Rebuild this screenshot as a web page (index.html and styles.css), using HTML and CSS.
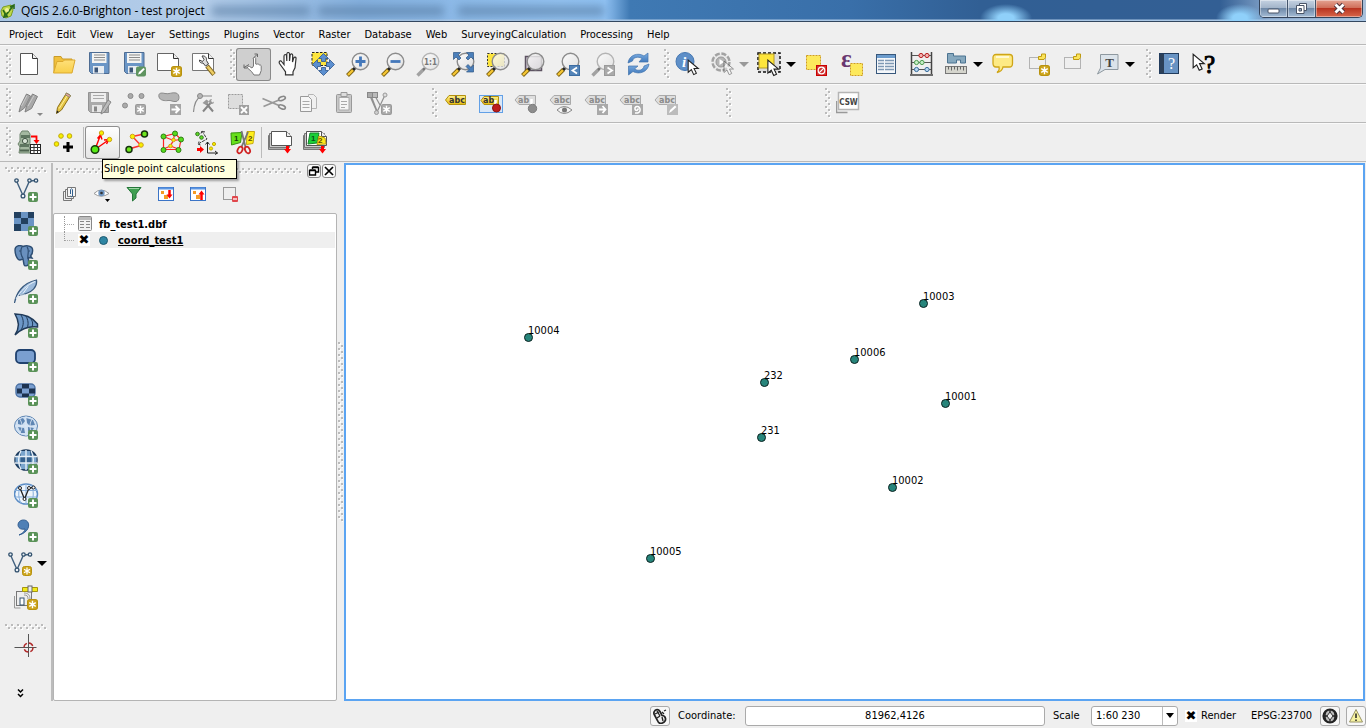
FILE: index.html
```html
<!DOCTYPE html>
<html lang="en">
<head>
<meta charset="utf-8">
<title>QGIS 2.6.0-Brighton - test project</title>
<link rel="stylesheet" href="styles.css">
</head>
<body>
<svg class="gradients" aria-hidden="true">
  <defs>
    <linearGradient id="g-glass" x1="0" y1="0" x2="1" y2="1"><stop offset="0" stop-color="#fff"/><stop offset="1" stop-color="#dcdcdc"/></linearGradient>
    <linearGradient id="g-folder" x1="0" y1="0" x2="0" y2="1"><stop offset="0" stop-color="#ffe07a"/><stop offset="1" stop-color="#f8cf4a"/></linearGradient>
    <linearGradient id="g-tag" x1="0" y1="0" x2="0" y2="1"><stop offset="0" stop-color="#fdf08a"/><stop offset="1" stop-color="#e6bd10"/></linearGradient>
    <linearGradient id="g-blue" x1="0" y1="0" x2="0" y2="1"><stop offset="0" stop-color="#7fb0e4"/><stop offset="1" stop-color="#3a74b8"/></linearGradient>
  </defs>
</svg>
<svg class="sprites" aria-hidden="true">
  <symbol id="plus" viewBox="0 0 10 10"><rect width="10" height="10" rx="2" fill="#5a9258"/><path d="M5 1.500v7M1.500 5h7" stroke="#fff" stroke-width="2"/></symbol>
  <symbol id="star" viewBox="0 0 10 10"><rect x=".5" y=".5" width="9" height="9" rx="2" fill="#cda51c" stroke="#b8920e"/><path d="M5 1.500v7M2 3.200l6 3.600M8 3.200l-6 3.600" stroke="#fff" stroke-width="1.300"/></symbol>
  <symbol id="star-grey" viewBox="0 0 10 10"><rect x=".5" y=".5" width="9" height="9" rx="1.500" fill="#aaa" stroke="#999"/><path d="M5 1.500v7M2 3.200l6 3.600M8 3.200l-6 3.600" stroke="#fff" stroke-width="1.300"/></symbol>
  <symbol id="cursor" viewBox="0 0 12 16"><path d="M1 1v11.500l3-2.500 2.200 4.700 2.500-1.200-2.200-4.500h4z" fill="#fff" stroke="#222" stroke-width="1"/></symbol>
  <symbol id="lens" viewBox="0 0 25 25"><path d="M1.500 23.500l6-6" stroke="#7a6012" stroke-width="4"/><path d="M2 23l5.500-5.500" stroke="#f5c634" stroke-width="2.400"/><path d="M7 18l2.500-2.500" stroke="#222" stroke-width="3"/><circle cx="14.500" cy="9.500" r="8.300" fill="url(#g-glass)" fill-opacity=".8" stroke="#8c8c8c" stroke-width="1.400"/></symbol>
  <symbol id="lens-grey" viewBox="0 0 25 25"><path d="M1.500 23.500l6-6" stroke="#a2a2a2" stroke-width="3.400"/><path d="M7 18l2.500-2.500" stroke="#777" stroke-width="2.500"/><circle cx="14.500" cy="9.500" r="8.300" fill="url(#g-glass)" fill-opacity=".7" stroke="#b4b4b4" stroke-width="1.400"/></symbol>
  <symbol id="tag-grey" viewBox="0 0 25 25"><path d="M6 4.500h16.500v9H6L2 9z" fill="#dedede" stroke="#aaa"/></symbol>

  <symbol id="i-new" viewBox="0 0 25 25"><path d="M3.500 1.500h12l5 5v16h-17z" fill="#fff" stroke="#555"/><path d="M15.500 1.500v5h5" fill="#eee" stroke="#333"/></symbol>
  <symbol id="i-open" viewBox="0 0 25 25"><path d="M2 20V4.500h7l1.500 2.500h9.500v4" fill="#f0c03c" stroke="#c99b28"/><path d="M1.500 21L5 9.500h6L12.500 8h10.500l-3 13z" fill="url(#g-folder)" stroke="#dca92e"/></symbol>
  <symbol id="i-save" viewBox="0 0 25 25"><path d="M2.500.500h19.500v21H4.500l-2-2z" fill="#6b96c6" stroke="#4e6c92"/><rect x="5" y="1" width="14.500" height="10" fill="#f4f4f2"/><path d="M7 3h11M7 5.500h11M7 8h11" stroke="#8b8b8b"/><rect x="6" y="14" width="11" height="7.500" fill="#e8edf2"/><rect x="7.500" y="15.500" width="3.500" height="5" fill="#3b5577"/></symbol>
  <symbol id="i-saveas" viewBox="0 0 25 25"><use href="#i-save"/><rect x="14" y="14.500" width="10" height="10" rx="2" fill="#5f9460"/><path d="M16 22.500l1-2.500 4.500-4 1.300 1.300-4.300 4.400z" fill="#fff"/></symbol>
  <symbol id="i-composer" viewBox="0 0 25 25"><path d="M.5 1.500h16l5 5v12H.5z" fill="#fff" stroke="#666"/><path d="M16.500 1.500v5h5" fill="#eee" stroke="#333"/><use href="#star" x="14" y="14" width="11" height="11"/></symbol>
  <symbol id="i-manager" viewBox="0 0 25 25"><path d="M.5 1.500h16l5 5v12H.5z" fill="#fff" stroke="#777"/><path d="M16.500 1.500v5h5" fill="#eee" stroke="#333"/><path d="M15 14l7 8.500" stroke="#7d6420" stroke-width="4.400"/><path d="M15.500 14.500l6.200 7.600" stroke="#eccb62" stroke-width="2.600"/><path d="M10 4c2.500-.5 5 1 4.500 4.500l2 3.500-3 2-2.500-3c-2 .5-4-1-3.500-3l3 1.500 1.500-2z" fill="#ddd" stroke="#444"/></symbol>
  <symbol id="i-touch" viewBox="0 0 25 25"><path d="M12 6.500l4-4M13.500 2h3v3M8 12.500l-5 3M3 12.500v3.500h3.500" stroke="#666" fill="none"/><path d="M12.500 14V6.500c.4-1.500 1.800-1.500 2.200 0V12l1.300.3c1-.8 1.800-.3 2.200.8 1-.5 1.800 0 2 1v4.500l-1.700 4.400h-5.500l-2.500-3.500-4-3.500c-.5-1.500 1-2 2-1.500l2.500 1.500z" fill="#fff" stroke="#777"/></symbol>
  <symbol id="i-pan" viewBox="0 0 25 25"><path d="M7.500 17l-4-5.500c-1-2.500 1-3.500 2.500-1.500l2 2.500V4c.3-2 2.300-2 2.500 0l.3 5V2c.4-2 2.500-2 2.700 0v7l.7-6c.5-1.800 2.500-1.500 2.500.3L16.500 10l1.200-4c.8-1.500 2.600-1 2.300.8l-1 9-2 4v3H9.500v-3z" fill="#fff" stroke="#333" stroke-width="1.200"/></symbol>
  <symbol id="i-pansel" viewBox="0 0 25 25"><rect x="1" y=".500" width="15" height="13" fill="#fde53c" stroke="#222" stroke-dasharray="2.500 1.500"/><path d="M12.500 1.500l5 5h-3v3h-4v-3h-3zM12.500 23.500l-5-5h3v-3h4v3h3zM1.500 12.500l5-5v3h3v4h-3v3zM23.500 12.500l-5-5v3h-3v4h3v3z" fill="#5b8fd0" stroke="#2f568a" stroke-width=".8"/></symbol>
  <symbol id="i-zin" viewBox="0 0 25 25"><use href="#lens"/><path d="M14.500 4.500v10M9.500 9.500h10" stroke="#4478ba" stroke-width="2.800"/></symbol>
  <symbol id="i-zout" viewBox="0 0 25 25"><use href="#lens"/><path d="M9.500 9.500h10" stroke="#4478ba" stroke-width="2.800"/></symbol>
  <symbol id="i-z11" viewBox="0 0 25 25"><use href="#lens-grey"/><text x="14.500" y="13" text-anchor="middle" class="t9" fill="#777">1:1</text></symbol>
  <symbol id="i-zfull" viewBox="0 0 25 25"><use href="#lens"/><path d="M2.500.500h7l-2.500 2.500 3 3-2 2-3-3-2.500 2.500zM22.500.500v7L20 5l-3 3-2-2 3-3-2.500-2.500zM22.500 20v-7L20 15.500l-3-3-2 2 3 3-2.500 2.500z" fill="#4b7fba" stroke="#2e5684" stroke-width=".7"/></symbol>
  <symbol id="i-zsel" viewBox="0 0 25 25"><rect x="1.500" y="1.500" width="17" height="13" fill="#fde53c" stroke="#333" stroke-dasharray="2 1.500"/><use href="#lens"/></symbol>
  <symbol id="i-zlay" viewBox="0 0 25 25"><path d="M4.500 4.500h16v14h-16z" fill="#c9bfcd" stroke="#5d5362" stroke-width="1.500"/><use href="#lens"/></symbol>
  <symbol id="i-zlast" viewBox="0 0 25 25"><use href="#lens"/><rect x="13.500" y="13.500" width="10" height="10" fill="#5484b8" stroke="#3b6ca2"/><path d="M21 15.500l-4.500 3 4.500 3" fill="none" stroke="#fff" stroke-width="1.800"/></symbol>
  <symbol id="i-znext" viewBox="0 0 25 25"><use href="#lens-grey"/><rect x="13.500" y="13.500" width="10" height="10" fill="#aaa" stroke="#9a9a9a"/><path d="M16.500 15.500l4.500 3-4.500 3" fill="none" stroke="#fff" stroke-width="1.800"/></symbol>
  <symbol id="i-refresh" viewBox="0 0 25 25"><path d="M2 11C3 3 12 0 18 4l4-3v9h-9l3-3.500C12 4 7 5.500 6.500 9z" fill="url(#g-blue)" stroke="#4274ad" stroke-width=".7"/><path d="M23 12c-1 8-10 11-16 7.500L2.500 23v-9h9.500l-3.500 3C12.500 19.500 17.500 18 18 14z" fill="url(#g-blue)" stroke="#4274ad" stroke-width=".7"/></symbol>
  <symbol id="i-info" viewBox="0 0 25 25"><circle cx="10" cy="9.500" r="9" fill="#5e8fc8" stroke="#4477b2"/><text x="9" y="15" text-anchor="middle" class="serif-i" fill="#fff">i</text><use href="#cursor" x="12" y="7" width="13" height="17"/></symbol>
  <symbol id="i-action" viewBox="0 0 25 25"><circle cx="11" cy="10" r="8.500" fill="#e8e8e8" stroke="#a2a2a2" stroke-width="2.400" stroke-dasharray="5 1.700"/><circle cx="11" cy="10" r="5" fill="#b5b5b5" stroke="#999"/><path d="M9.500 7l4.500 3-4.500 3z" fill="#fff"/><use href="#cursor" x="13" y="8" width="12" height="16" opacity=".45"/></symbol>
  <symbol id="i-select" viewBox="0 0 25 25"><rect x="1" y="1" width="22" height="19" fill="#ddd" stroke="#111" stroke-width="1.500" stroke-dasharray="3 2"/><rect x="2" y="2" width="15" height="14" fill="#fde53c" stroke="#b59c24"/><use href="#cursor" x="9" y="7" width="15" height="18"/></symbol>
  <symbol id="i-desel" viewBox="0 0 25 25"><rect x="2.500" y="3.500" width="14" height="14" fill="#fde95c" stroke="#cf9d20" stroke-dasharray="2 1"/><rect x="12.500" y="13.500" width="10" height="10" fill="#cf3434" stroke="#c00"/><circle cx="17.500" cy="18.500" r="3.300" fill="none" stroke="#fff" stroke-width="1.200"/><path d="M15.300 20.700l4.500-4.500" stroke="#fff" stroke-width="1.200"/></symbol>
  <symbol id="i-expr" viewBox="0 0 25 25"><text x="2" y="15" class="eps" fill="#69376f">ε</text><rect x="11.500" y="11.500" width="12" height="12" fill="#fde95c" stroke="#cf9d20" stroke-dasharray="2 1"/></symbol>
  <symbol id="i-table" viewBox="0 0 25 25"><rect x="2.500" y="2.500" width="19" height="19" fill="#f4f7fa" stroke="#38587c"/><path d="M3 4.500h18" stroke="#6c9ccd" stroke-width="3"/><path d="M4 8.500h6M11 8.500h9M4 11.500h6M11 11.500h9M4 14.500h6M11 14.500h9M4 17.500h6M11 17.500h9" stroke="#7f99b4" stroke-width="1.400"/></symbol>
  <symbol id="i-abacus" viewBox="0 0 25 25"><path d="M2.500 0v22M22.500 0v22M1 23h23" stroke="#444" stroke-width="1.500"/><path d="M3 3.500h19M3 10.500h19M3 17.500h19" stroke="#555"/><g fill="#f6b3b3" stroke="#b81d1d"><circle cx="12" cy="3.500" r="2.100"/><circle cx="18" cy="3.500" r="2.100"/></g><g fill="#c6efc6" stroke="#4d9a50"><circle cx="7.500" cy="10.500" r="2.100"/><circle cx="13" cy="10.500" r="2.100"/></g><g fill="#b9d6ee" stroke="#376d9e"><circle cx="7.500" cy="17.500" r="2.100"/><circle cx="18" cy="17.500" r="2.100"/></g></symbol>
  <symbol id="i-measure" viewBox="0 0 25 25"><path d="M3.500 1.500h6v2.500h12v7h-5V8h-4v3h-9z" fill="#86a8be" stroke="#4b7390"/><rect x="1.500" y="14.500" width="21" height="7" fill="#d5d5cd" stroke="#777"/><path d="M4.500 14.500v3M7.500 14.500v4M10.500 14.500v3M13.500 14.500v4M16.500 14.500v3M19.500 14.500v4" stroke="#666"/></symbol>
  <symbol id="i-tips" viewBox="0 0 25 25"><path d="M5 2.500h13.500c2 0 3 1.500 3 3v6c0 2-1 3.500-3 3.500H12c-.5 3-3 5-6 5.500C8 19 8.500 17 8 15H5c-2 0-3-1.500-3-3.500v-6c0-1.500 1-3 3-3z" fill="#fdea85" stroke="#cfa517" stroke-width="1.300"/><path d="M5 5h13" stroke="#fff8cf" stroke-width="2"/></symbol>
  <symbol id="i-bmark" viewBox="0 0 25 25"><rect x="3.500" y="5.500" width="16" height="11" fill="none" stroke="#777" stroke-dasharray="1 1"/><path d="M12.500 7.500v-3h3v-2.500h4v3.500l-1.500 2z" fill="#fbe45a" stroke="#bf9b10"/></symbol>
  <symbol id="i-bmnew" viewBox="0 0 25 25"><use href="#i-bmark"/><use href="#star" x="13" y="13" width="11" height="11"/></symbol>
  <symbol id="i-textann" viewBox="0 0 25 25"><path d="M4.500 2.500H22v15H9L1.500 22l3-6z" fill="#dbe3ea" stroke="#8e989f"/><text x="13.500" y="14.500" text-anchor="middle" class="serif12" fill="#444">T</text></symbol>
  <symbol id="i-help" viewBox="0 0 25 25"><rect x="2.500" y="1.500" width="19" height="20" fill="#6893c3" stroke="#223c5d"/><path d="M3 2h4v19H3z" fill="#2c4058"/><text x="14.500" y="17" text-anchor="middle" class="serif15" fill="#fff">?</text></symbol>
  <symbol id="i-what" viewBox="0 0 25 25"><use href="#cursor" x="0" y="1" width="14" height="19"/><text x="12" y="21" class="qmark" fill="#000">?</text></symbol>

  <symbol id="i-edits" viewBox="0 0 25 25"><g fill="#a8a8a8" stroke="#808080"><path d="M2 21l1.500-6 6-12 4 2-6 12z"/><path d="M8 21l1.500-6 6-12 5 2.500-6 12z"/></g><path d="M4.500 15l5.500-10.500M11 15l6-10.500" stroke="#ccc"/></symbol>
  <symbol id="i-pencil" viewBox="0 0 25 25"><path d="M4.500 22.500l1-6L14.500 2l4 2.500-9 14.500z" fill="#e5c545" stroke="#8d7018"/><path d="M14.500 2l4 2.500-1 2-4.200-2.700z" fill="#e8a0a0" stroke="#886"/><path d="M7.200 17.500L15 5" stroke="#fff2a0"/><path d="M4.500 22.500l.5-3 2 1.500z" fill="#222"/></symbol>
  <symbol id="i-saveed" viewBox="0 0 25 25"><path d="M1.500 1.500h20v20h-18l-2-2z" fill="#aaa" stroke="#929292"/><path d="M4 2h15v9H4z" fill="#eee"/><path d="M6 4.500h11M6 7.500h11" stroke="#aaa"/><path d="M5 14h10v7H5z" fill="#e6e6e6"/><path d="M7 15.500h3v5H7z" fill="#888"/><path d="M14 23l1-4 6-10 3 2-6.500 10z" fill="#bbb" stroke="#888"/></symbol>
  <symbol id="i-addf" viewBox="0 0 25 25"><g fill="#aaa" stroke="#8d8d8d"><circle cx="8.500" cy="5" r="2.500"/><circle cx="19.500" cy="5" r="2.500"/><circle cx="3" cy="14.500" r="2.500"/></g><use href="#star-grey" x="13" y="13" width="11" height="11"/></symbol>
  <symbol id="i-movef" viewBox="0 0 25 25"><path d="M2 6c-1-4 2-4.500 6-3.500s7-1.500 11-.5c4 1 4 8 0 8.500-3 .5-5-1.500-8-1s-8 0-9-3.500z" fill="#b5b5b5" stroke="#8b8b8b"/><rect x="13" y="13" width="11" height="11" fill="#a5a5a5"/><path d="M14.500 18.500h7M18.500 15l3.500 3.500-3.500 3.500" fill="none" stroke="#fff" stroke-width="2"/></symbol>
  <symbol id="i-node" viewBox="0 0 25 25"><path d="M1.500 21C2 14 4 8 8.500 5.500M8 5h12" fill="none" stroke="#8a8a8a" stroke-width="1.200"/><circle cx="8" cy="5" r="2.500" fill="#b5b5b5" stroke="#888"/><path d="M11 20.500l7.500-8.500M14 12l7 8.500" stroke="#858585" stroke-width="2"/><path d="M10.500 12l4-3.500 2.500 2-3 3.500zM17 11q0-3 3-3l-1 2 1.500 1.500 1.500-1q0 3-3 2.500z" fill="#999"/></symbol>
  <symbol id="i-delsel" viewBox="0 0 25 25"><rect x="1.500" y="3.500" width="14" height="14" fill="#ddd" stroke="#9b9b9b" stroke-dasharray="2 1"/><rect x="12" y="14" width="10" height="10" fill="#a0a0a0"/><path d="M14 16l6 6M20 16l-6 6" stroke="#fff" stroke-width="1.800"/></symbol>
  <symbol id="i-cut" viewBox="0 0 25 25"><path d="M.5 7.500L17 14.500M1.500 15.500L17 9" stroke="#999" stroke-width="1.800"/><g fill="none" stroke="#888" stroke-width="1.600"><ellipse cx="20" cy="7.500" rx="3.500" ry="1.800" transform="rotate(-20 20 7.500)"/><ellipse cx="20" cy="16" rx="3.500" ry="1.800" transform="rotate(20 20 16)"/></g></symbol>
  <symbol id="i-copy" viewBox="0 0 25 25"><path d="M11.500 3.500h5l3 3v11h-8z" fill="#f0f0f0" stroke="#b5b5b5"/><path d="M3.500 5.500h8l3 3v12h-11z" fill="#f6f6f6" stroke="#999"/><path d="M5.500 10.500h7M5.500 13.500h7M5.500 16.500h7" stroke="#aaa"/></symbol>
  <symbol id="i-paste" viewBox="0 0 25 25"><rect x="4.500" y="3.500" width="15" height="18" rx="1" fill="#c8c8c8" stroke="#999"/><path d="M7 6.500h10v12.500H7z" fill="#f6f6f6" stroke="#aaa"/><path d="M9 1.500h6v4H9z" fill="#ddd" stroke="#999"/><path d="M9 10.500h6M9 13.500h6M9 16.500h4" stroke="#aaa"/></symbol>
  <symbol id="i-topo" viewBox="0 0 25 25"><path d="M3 5l7 16L18 4M8 5l5 9M10 20l-5-13" fill="none" stroke="#8f8f8f" stroke-width="1.200"/><rect x=".5" y="1.500" width="5" height="5" fill="#aaa" stroke="#888"/><rect x="5.500" y="1.500" width="5" height="5" fill="#bbb" stroke="#888"/><circle cx="18" cy="4" r="2" fill="#ddd" stroke="#999"/><circle cx="9.500" cy="21.500" r="2" fill="#ccc" stroke="#999"/><use href="#star-grey" x="14" y="13" width="11" height="11"/></symbol>
  <symbol id="i-abc" viewBox="0 0 25 25"><path d="M6 4.500h16.500v9H6L2.500 9z" fill="url(#g-tag)" stroke="#b2900f"/><text x="14" y="12" text-anchor="middle" class="abc" fill="#333">abc</text></symbol>
  <symbol id="i-abcpin" viewBox="0 0 25 25"><rect x="1.500" y="4.500" width="23" height="17" fill="#d9e7f8" stroke="#62a0e6"/><path d="M6 5.500h14.500v8H6L3 9.500z" fill="url(#g-tag)" stroke="#b2900f"/><text x="5" y="12" class="abc" fill="#333">ab</text><path d="M17.500 9v7" stroke="#fff" stroke-width="2.500"/><circle cx="18.500" cy="17" r="4" fill="#bd1d1d" stroke="#8c1212"/></symbol>
  <symbol id="i-abcpin2" viewBox="0 0 25 25"><use href="#tag-grey"/><text x="5" y="12" class="abc" fill="#8a8a8a">ab</text><path d="M18.500 8v8" stroke="#fff" stroke-width="2.500"/><circle cx="19.500" cy="17.500" r="4.200" fill="#8d8d8d" stroke="#7d7d7d"/></symbol>
  <symbol id="i-abceye" viewBox="0 0 25 25"><use href="#tag-grey"/><text x="14" y="12" text-anchor="middle" class="abc" fill="#8a8a8a">abc</text><path d="M9 19q7-7 15 0q-8 7-15 0z" fill="#f4f4f4" stroke="#888"/><circle cx="16.500" cy="19" r="2.500" fill="#777"/></symbol>
  <symbol id="i-abcmove" viewBox="0 0 25 25"><use href="#tag-grey"/><text x="14" y="12" text-anchor="middle" class="abc" fill="#8a8a8a">abc</text><rect x="14" y="13" width="11" height="11" fill="#a9a9a9"/><path d="M16 18.500h6M19.500 15l3 3.500-3 3.500" fill="none" stroke="#fff" stroke-width="1.800"/></symbol>
  <symbol id="i-abcrot" viewBox="0 0 25 25"><use href="#tag-grey"/><text x="14" y="12" text-anchor="middle" class="abc" fill="#8a8a8a">abc</text><rect x="14" y="13" width="11" height="11" fill="#a9a9a9"/><path d="M17 22c7 1 6-7 2-6.500-3 .5-2.500 4 0 4l1.500-2" fill="none" stroke="#fff" stroke-width="1.500"/></symbol>
  <symbol id="i-abcedit" viewBox="0 0 25 25"><use href="#tag-grey"/><text x="14" y="12" text-anchor="middle" class="abc" fill="#8a8a8a">abc</text><rect x="14" y="13" width="11" height="11" fill="#bcbcbc"/><path d="M16 22l1-3 5-4.500 1.500 1.500-5 4.500z" fill="#fff"/></symbol>
  <symbol id="i-csw" viewBox="0 0 25 25"><path d="M.5 10v11.500h11" fill="none" stroke="#999" stroke-width="1.500"/><rect x="2.500" y="1.500" width="20" height="17" fill="#fff" stroke="#b5b5b5" stroke-width="1.500"/><text x="12.500" y="13.500" text-anchor="middle" class="csw" fill="#444">CSW</text></symbol>

  <symbol id="i-station" viewBox="0 0 25 25"><path d="M3 4l2-3h6l2 3v9l-1 3 2 7H2l1-6-2-3 2-3z" fill="#a3b8a0" stroke="#6f846e"/><path d="M4 5h9v3H4zM3 14h9v3H3z" fill="#5e7660"/><circle cx="8" cy="11" r="2.600" fill="#d9e4d6" stroke="#435646"/><path d="M3 20.500h9" stroke="#4e6450" stroke-width="2"/><path d="M14 6.500h5.500v5" fill="none" stroke="#f00" stroke-width="1.800"/><path d="M16.500 10h6l-3 4z" fill="#f00"/><rect x="13.500" y="14.500" width="10" height="9" fill="#fff" stroke="#222"/><path d="M17 14.500v9M20.500 14.500v9M13.500 17.500h10M13.500 20.500h10" stroke="#333"/></symbol>
  <symbol id="i-addpt" viewBox="0 0 25 25"><g fill="#f7ef00" stroke="#c1a90a"><circle cx="9" cy="6" r="2.300"/><circle cx="17.500" cy="6" r="2.300"/><circle cx="4.500" cy="14" r="2.300"/></g><path d="M16 12v10M11 17h10" stroke="#000" stroke-width="3"/></symbol>
  <symbol id="i-single" viewBox="0 0 25 25"><path d="M5 19.500L10.500 5M5 19.500L18.500 10M7.500 8.500l3-3.500 1.500 4.500M14 10l5-.5-2.500 4.500" fill="none" stroke="#f00" stroke-width="1.400"/><circle cx="5" cy="19.500" r="3.800" fill="#56ea14" stroke="#163c0d" stroke-width="1.500"/><g fill="#f7ef00" stroke="#c9a21b"><circle cx="11.500" cy="3" r="2.200"/><circle cx="19.500" cy="9.500" r="2.200"/></g></symbol>
  <symbol id="i-trav" viewBox="0 0 25 25"><path d="M19 4L7.500 6.500l8.500 9L3.500 19" fill="none" stroke="#f33" stroke-width="1.500"/><g fill="#6ee61e" stroke="#16330e" stroke-width="1.500"><circle cx="19.500" cy="4" r="3"/><circle cx="4" cy="19.500" r="3"/></g><g fill="#f7ef00" stroke="#d0a01d"><circle cx="7.500" cy="6.500" r="2.300"/><circle cx="16" cy="15" r="2.300"/></g></symbol>
  <symbol id="i-net" viewBox="0 0 25 25"><path d="M3.500 6.500L15 3.500l6 6-2 10H3.500zM3.500 6.500l10 4 7-1M13.500 10l-3 6 9 3.500M10.500 16l-7 3M13.500 10l1-6.500" fill="none" stroke="#f22" stroke-width="1.200"/><g fill="#57da1c" stroke="#2f7e16"><circle cx="3.500" cy="6.500" r="2.500"/><circle cx="15" cy="3.500" r="2.500"/><circle cx="21" cy="9.500" r="2.500"/><circle cx="18.500" cy="20" r="2.500"/><circle cx="3.500" cy="20" r="2.500"/></g><g fill="#f7ef00" stroke="#d0a01d"><circle cx="13.500" cy="10" r="1.800"/><circle cx="10.500" cy="16" r="1.800"/></g></symbol>
  <symbol id="i-transf" viewBox="0 0 25 25"><g fill="#5cdb22" stroke="#34761f"><circle cx="2.500" cy="4" r="1.800"/><circle cx="6.500" cy="7.500" r="1.800"/></g><path d="M7 1l5 8-9 5M6 3.500L7 1l3 1M5.500 15l-2.500-1 1-2.500" fill="none" stroke="#333" stroke-dasharray="3 1"/><path d="M12.500 12v11h10M10.500 14.500l2-2.500 2 2.500M20 21l2.500 2-2.500 1.500" fill="none" stroke="#222"/><path d="M2 19.500h4" stroke="#f00" stroke-width="3"/><path d="M5 16l4 3.500L5 23z" fill="#f00"/><g fill="#f7ef00" stroke="#c1a90a"><circle cx="19" cy="14" r="1.600"/><circle cx="16" cy="18.500" r="1.600"/></g></symbol>
  <symbol id="i-divide" viewBox="0 0 25 25"><path d="M1 3l11-.5-1.500 10L1.500 15z" fill="#66e01b" stroke="#38930f"/><path d="M17 1.500h7.500l-1.500 12-6.500 1z" fill="#ffef1a" stroke="#c7a912"/><path d="M11.500 1l4 16M18 2l-6.500 15" stroke="#777" stroke-width="1.800"/><g fill="none" stroke="#cf2222" stroke-width="1.800"><ellipse cx="10" cy="20" rx="2.300" ry="3.500" transform="rotate(25 10 20)"/><ellipse cx="17.500" cy="20" rx="2.300" ry="3.500" transform="rotate(-25 17.500 20)"/></g><text x="4" y="11" class="num" fill="#143f08">1</text><text x="18" y="11" class="num" fill="#5b4a05">2</text></symbol>
  <symbol id="i-sheets" viewBox="0 0 25 25"><path d="M.5 5.500h20v14H.500z" fill="#aaa" stroke="#777"/><path d="M1.500 3.500h20v14h-20z" fill="#ccc" stroke="#777"/><path d="M3.500 1.500h15l5 5v9h-20z" fill="#fff" stroke="#555"/><path d="M18.500 1.500v5h5" fill="#eee" stroke="#555"/></symbol>
  <symbol id="i-sheet1" viewBox="0 0 25 25"><use href="#i-sheets"/><path d="M19.500 16v4" stroke="#f00" stroke-width="3"/><path d="M16 19h7l-3.500 4.500z" fill="#f00"/></symbol>
  <symbol id="i-sheet2" viewBox="0 0 25 25"><use href="#i-sheets"/><path d="M7 3h9l-2 10-9 1z" fill="#1bcf37" stroke="#15862b"/><path d="M16 6l6 2 1 6-9 .5z" fill="#ffe81a" stroke="#bba013"/><text x="8" y="11" class="num" fill="#0b4e1b">1</text><text x="15" y="13" class="num" fill="#5b4a05">2</text><path d="M19.500 16v4" stroke="#f00" stroke-width="3"/><path d="M16 19h7l-3.500 4.500z" fill="#f00"/></symbol>

  <symbol id="vee" viewBox="0 0 25 25"><path d="M2.500 4L9 18.500 15.500 4l6.500-.5" fill="none" stroke="#42617f" stroke-width="1.400"/><g fill="#eef3f8" stroke="#34536f" stroke-width="1.300"><circle cx="2.500" cy="3.500" r="1.700"/><circle cx="9" cy="19" r="1.900"/><circle cx="15.500" cy="3.500" r="1.700"/><circle cx="22" cy="3.500" r="1.700"/></g></symbol>
  <symbol id="l-vec" viewBox="0 0 25 25"><use href="#vee"/><use href="#plus" x="14" y="15" width="10" height="10"/></symbol>
  <symbol id="l-ras" viewBox="0 0 25 25"><path d="M0 1h20v19H0z" fill="#6a94c4"/><path d="M0 1h7v6H0zM14 1h6v6h-6zM7 7h7v6H7zM0 13h7v7H0z" fill="#22405f"/><use href="#plus" x="14" y="15" width="10" height="10"/></symbol>
  <symbol id="l-pg" viewBox="0 0 25 25"><path d="M1 5c0-5 5-5 8-3.500C13 0 18 1 18.500 4c.5 3-1 6-2 7l1.500 2-3.500-.5v6c-.5 3-4 3-4.500 1L9 14l-3 1C3 15 1 9 1 5z" fill="#6990be" stroke="#2d4d72" stroke-width="1.400"/><path d="M8 2c-2 3-1 9 1 11M13 2c3 3 0 8 1 12M5 6h1.500M15 6h1" fill="none" stroke="#2d4d72" stroke-width="1.200"/><use href="#plus" x="14" y="15" width="10" height="10"/></symbol>
  <symbol id="l-feather" viewBox="0 0 25 25"><path d="M.5 24C2 15 8 4 22.500 1c1 6-3 13-18 15.500" fill="#9dbbdc" stroke="#37577c" stroke-width="1.200"/><path d="M2 20C6 12 13 6 21 2.500M9 14.500l5-7M6 16h5" fill="none" stroke="#e9f2fa"/><use href="#plus" x="14" y="15" width="10" height="10"/></symbol>
  <symbol id="l-mssql" viewBox="0 0 25 25"><path d="M1 1c9 0 17 3 22.500 10v3C14 13 6 17 1 22 6 14 5 8 1 1z" fill="#6d98c8" stroke="#203a59" stroke-width="1.500"/><path d="M7 2c3 5 3 10 0 15M12 3c2 4 3 8 1 12M17 6c2 3 2 5 1 8" fill="none" stroke="#203a59"/><use href="#plus" x="14" y="15" width="10" height="10"/></symbol>
  <symbol id="l-oracle" viewBox="0 0 25 25"><rect x="2" y="3" width="19" height="13" rx="4" fill="#7a9fd0" stroke="#20426f" stroke-width="1.800"/><use href="#plus" x="14" y="15" width="10" height="10"/></symbol>
  <symbol id="l-oras" viewBox="0 0 25 25"><rect x="2" y="3" width="19" height="13" rx="4" fill="#7a9fd0" stroke="#4c72a4" stroke-width="1.400"/><path d="M8 3h7v4.500H8zM3 7.500h5v5H3zM15 7.500h6v5h-6zM8 12.500h7V16H8z" fill="#1d3350"/><use href="#plus" x="14" y="15" width="10" height="10"/></symbol>
  <symbol id="l-wms" viewBox="0 0 25 25"><ellipse cx="12" cy="11" rx="11.500" ry="10" fill="#cfe0f2" stroke="#5f86b3"/><path d="M4 5l5-2 2 3-3 4-4-1zM12 3l7 2 2 5-5 1-3-3zM4 12l6 1 1 5-4 0zM14 12l6 1-3 4-3-1z" fill="#5f86b3"/><path d="M1 11h22M12 1v20M5 3c4 5 4 11 0 16M19 3c-4 5-4 11 0 16" fill="none" stroke="#dfeaf6" stroke-width=".8"/><use href="#plus" x="14" y="15" width="10" height="10"/></symbol>
  <symbol id="l-wcs" viewBox="0 0 25 25"><ellipse cx="12" cy="11" rx="11" ry="10" fill="#35628f" stroke="#1c3a5c" stroke-width="1.500"/><path d="M7 2h9v5H7zM7 14h9v6H7zM1.500 8h5v5h-5zM17.500 8h5v5h-5z" fill="#7aa5cd"/><path d="M1 7.500h22M1 14h22M12 1v20M7 1.500c-3 6-3 13 0 19M17 1.500c3 6 3 13 0 19" fill="none" stroke="#e6eff7" stroke-width="1.400"/><use href="#plus" x="14" y="15" width="10" height="10"/></symbol>
  <symbol id="l-wfs" viewBox="0 0 25 25"><ellipse cx="12" cy="11" rx="11.500" ry="10" fill="#eef5fc" stroke="#5c8dc5" stroke-width="1.500"/><path d="M1 7.500h22M1 14h22M12 1v20M7 1.500c-3 6-3 13 0 19M17 1.500c3 6 3 13 0 19" fill="none" stroke="#86aedb"/><path d="M6 5l4.500 11L15 5l4.500-.5" fill="none" stroke="#222" stroke-width="1.300"/><g fill="#fff" stroke="#222"><circle cx="6" cy="5" r="1.500"/><circle cx="10.500" cy="16" r="1.500"/><circle cx="15" cy="5" r="1.500"/><circle cx="19.500" cy="4.500" r="1.500"/></g><use href="#plus" x="14" y="15" width="10" height="10"/></symbol>
  <symbol id="l-csv" viewBox="0 0 25 25"><path d="M5 18c4-2 6-4 6-6-9 2-9-9-1.500-9C17 3 17 15 5 18z" fill="#4f80b6" stroke="#2f5c90"/><use href="#plus" x="14" y="15" width="10" height="10"/></symbol>
  <symbol id="l-newvec" viewBox="0 0 25 25"><use href="#vee"/><use href="#star" x="14" y="15" width="10" height="10"/></symbol>
  <symbol id="l-gps" viewBox="0 0 25 25"><path d="M.5 11v12h6" fill="none" stroke="#999"/><rect x="2.500" y="6.500" width="15" height="14" fill="#eee" stroke="#777"/><rect x="6" y="13" width="4" height="7" fill="#fff" stroke="#34536f"/><path d="M10 10c3 0 4 1 4 4M10 8c4 0 6 2 6 6" fill="none" stroke="#999"/><path d="M8.500 2.500h6v4h-6zM17.500 2.500h6v4h-6z" fill="#f1ea1a" stroke="#a69510"/><rect x="14" y="1" width="4" height="6" fill="#eee" stroke="#666"/><use href="#star" x="13" y="14" width="11" height="11"/></symbol>
  <symbol id="l-cross" viewBox="0 0 25 25"><path d="M.5 13.500h22M14.500 0v23" stroke="#555"/><circle cx="14.500" cy="13.500" r="4.500" fill="none" stroke="#b02a2a" stroke-width="1.400" stroke-dasharray="5 2"/></symbol>
</svg>

<div class="window">
  <header class="titlebar">
    <div class="ghost g1"></div><div class="ghost g2"></div><div class="ghost g3"></div>
    <svg class="logo" viewBox="0 0 16 16"><path d="M3 4l8-2 2 5-2 6-5 2-4-2-1-5z" fill="#bfd84a" stroke="#7b9c24"/><path d="M3 7l3 5 7-9M5 11l-1 3 4-1M10 4l4-2v4" fill="none" stroke="#2c6b1a" stroke-width="1.600"/><circle cx="7" cy="7" r="2" fill="#f1f39c"/></svg>
    <h1 class="title">QGIS 2.6.0-Brighton - test project</h1>
    <div class="winbtns">
      <button class="wb" aria-label="Minimize"><svg viewBox="0 0 13 13"><rect x="1" y="7" width="11" height="4" rx="1" fill="#fff" stroke="#4a5568"/></svg></button>
      <button class="wb" aria-label="Restore"><svg viewBox="0 0 13 13"><path d="M4.500 1.500h7v7h-7z" fill="#fff" stroke="#4a5568"/><path d="M1.500 3.500h7.500v8H1.500z" fill="#fff" stroke="#4a5568"/><path d="M4 6.500h2.500v2.500H4z" fill="#9ab" stroke="#4a5568"/></svg></button>
      <button class="wb close" aria-label="Close"><svg viewBox="0 0 13 13"><path d="M2.500 2.500l8 8M10.500 2.500l-8 8" stroke="#4b3038" stroke-width="4.600"/><path d="M2.500 2.500l8 8M10.500 2.500l-8 8" stroke="#fff" stroke-width="2.800"/></svg></button>
    </div>
  </header>

  <nav class="menubar">
    <button>Project</button><button>Edit</button><button>View</button><button>Layer</button><button>Settings</button><button>Plugins</button><button>Vector</button><button>Raster</button><button>Database</button><button>Web</button><button>SurveyingCalculation</button><button>Processing</button><button>Help</button>
  </nav>

  <div class="toolbar">
    <i class="grip"></i>
    <div class="group">
      <button class="tb" aria-label="New"><svg><use href="#i-new"/></svg></button>
      <button class="tb" aria-label="Open"><svg><use href="#i-open"/></svg></button>
      <button class="tb" aria-label="Save"><svg><use href="#i-save"/></svg></button>
      <button class="tb" aria-label="Save As"><svg><use href="#i-saveas"/></svg></button>
      <button class="tb" aria-label="New Print Composer"><svg><use href="#i-composer"/></svg></button>
      <button class="tb" aria-label="Composer Manager"><svg><use href="#i-manager"/></svg></button>
    </div>
    <i class="grip"></i>
    <div class="group">
      <button class="tb pressed" aria-label="Touch Zoom"><svg><use href="#i-touch"/></svg></button>
      <button class="tb" aria-label="Pan"><svg><use href="#i-pan"/></svg></button>
      <button class="tb" aria-label="Pan to Selection"><svg><use href="#i-pansel"/></svg></button>
      <button class="tb" aria-label="Zoom In"><svg><use href="#i-zin"/></svg></button>
      <button class="tb" aria-label="Zoom Out"><svg><use href="#i-zout"/></svg></button>
      <button class="tb" aria-label="Zoom Native"><svg><use href="#i-z11"/></svg></button>
      <button class="tb" aria-label="Zoom Full"><svg><use href="#i-zfull"/></svg></button>
      <button class="tb" aria-label="Zoom to Selection"><svg><use href="#i-zsel"/></svg></button>
      <button class="tb" aria-label="Zoom to Layer"><svg><use href="#i-zlay"/></svg></button>
      <button class="tb" aria-label="Zoom Last"><svg><use href="#i-zlast"/></svg></button>
      <button class="tb" aria-label="Zoom Next"><svg><use href="#i-znext"/></svg></button>
      <button class="tb" aria-label="Refresh"><svg><use href="#i-refresh"/></svg></button>
    </div>
    <i class="grip"></i>
    <div class="group">
      <button class="tb" aria-label="Identify"><svg><use href="#i-info"/></svg></button>
      <button class="tb drop off" aria-label="Run Action"><svg><use href="#i-action"/></svg></button>
      <button class="tb drop" aria-label="Select"><svg><use href="#i-select"/></svg></button>
      <button class="tb" aria-label="Deselect"><svg><use href="#i-desel"/></svg></button>
      <button class="tb" aria-label="Select by Expression"><svg><use href="#i-expr"/></svg></button>
      <button class="tb" aria-label="Attribute Table"><svg><use href="#i-table"/></svg></button>
      <button class="tb" aria-label="Field Calculator"><svg><use href="#i-abacus"/></svg></button>
      <button class="tb drop" aria-label="Measure"><svg><use href="#i-measure"/></svg></button>
      <button class="tb" aria-label="Map Tips"><svg><use href="#i-tips"/></svg></button>
      <button class="tb" aria-label="New Bookmark"><svg><use href="#i-bmnew"/></svg></button>
      <button class="tb" aria-label="Show Bookmarks"><svg><use href="#i-bmark"/></svg></button>
      <button class="tb drop" aria-label="Text Annotation"><svg><use href="#i-textann"/></svg></button>
    </div>
    <i class="grip"></i>
    <div class="group">
      <button class="tb" aria-label="Help Contents"><svg><use href="#i-help"/></svg></button>
      <button class="tb" aria-label="What's This"><svg><use href="#i-what"/></svg></button>
    </div>
  </div>

  <div class="toolbar">
    <i class="grip"></i>
    <div class="group edit">
      <button class="tb corner" aria-label="Current Edits"><svg><use href="#i-edits"/></svg></button>
      <button class="tb" aria-label="Toggle Editing"><svg><use href="#i-pencil"/></svg></button>
      <button class="tb" aria-label="Save Edits"><svg><use href="#i-saveed"/></svg></button>
      <button class="tb" aria-label="Add Feature"><svg><use href="#i-addf"/></svg></button>
      <button class="tb" aria-label="Move Feature"><svg><use href="#i-movef"/></svg></button>
      <button class="tb" aria-label="Node Tool"><svg><use href="#i-node"/></svg></button>
      <button class="tb" aria-label="Delete Selected"><svg><use href="#i-delsel"/></svg></button>
      <button class="tb" aria-label="Cut"><svg><use href="#i-cut"/></svg></button>
      <button class="tb" aria-label="Copy"><svg><use href="#i-copy"/></svg></button>
      <button class="tb" aria-label="Paste"><svg><use href="#i-paste"/></svg></button>
      <button class="tb" aria-label="Topology"><svg><use href="#i-topo"/></svg></button>
    </div>
    <i class="grip"></i>
    <div class="group label">
      <button class="tb" aria-label="Labeling"><svg><use href="#i-abc"/></svg></button>
      <button class="tb" aria-label="Highlight Pinned Labels"><svg><use href="#i-abcpin"/></svg></button>
      <button class="tb" aria-label="Pin Labels"><svg><use href="#i-abcpin2"/></svg></button>
      <button class="tb" aria-label="Show Labels"><svg><use href="#i-abceye"/></svg></button>
      <button class="tb" aria-label="Move Label"><svg><use href="#i-abcmove"/></svg></button>
      <button class="tb" aria-label="Rotate Label"><svg><use href="#i-abcrot"/></svg></button>
      <button class="tb" aria-label="Change Label"><svg><use href="#i-abcedit"/></svg></button>
    </div>
    <i class="grip"></i>
    <div class="group blank"></div>
    <i class="grip"></i>
    <div class="group"><button class="tb" aria-label="Catalogue Search"><svg><use href="#i-csw"/></svg></button></div>
  </div>

  <div class="toolbar">
    <i class="grip"></i>
    <div class="group">
      <button class="tb" aria-label="Load Fieldbook"><svg><use href="#i-station"/></svg></button>
      <button class="tb" aria-label="Add New Point"><svg><use href="#i-addpt"/></svg></button>
      <i class="sep"></i>
      <div class="tipwrap">
        <button class="tb hover" aria-label="Single point calculations" aria-describedby="tip"><svg><use href="#i-single"/></svg></button>
        <div class="tooltip" role="tooltip" id="tip">Single point calculations</div>
      </div>
      <button class="tb" aria-label="Traverse"><svg><use href="#i-trav"/></svg></button>
      <button class="tb" aria-label="Network Adjustment"><svg><use href="#i-net"/></svg></button>
      <button class="tb" aria-label="Coordinate Transformation"><svg><use href="#i-transf"/></svg></button>
      <button class="tb" aria-label="Polygon Division"><svg><use href="#i-divide"/></svg></button>
      <i class="sep"></i>
      <button class="tb" aria-label="Plot by Template"><svg><use href="#i-sheet1"/></svg></button>
      <button class="tb" aria-label="Batch Plotting"><svg><use href="#i-sheet2"/></svg></button>
    </div>
  </div>

  <div class="main">
    <aside class="side">
      <i class="hgrip"></i>
      <button class="sb" aria-label="Add Vector Layer"><svg><use href="#l-vec"/></svg></button>
      <button class="sb" aria-label="Add Raster Layer"><svg><use href="#l-ras"/></svg></button>
      <button class="sb" aria-label="Add PostGIS Layer"><svg><use href="#l-pg"/></svg></button>
      <button class="sb" aria-label="Add SpatiaLite Layer"><svg><use href="#l-feather"/></svg></button>
      <button class="sb" aria-label="Add MSSQL Layer"><svg><use href="#l-mssql"/></svg></button>
      <button class="sb" aria-label="Add Oracle Layer"><svg><use href="#l-oracle"/></svg></button>
      <button class="sb" aria-label="Add Oracle Raster"><svg><use href="#l-oras"/></svg></button>
      <button class="sb" aria-label="Add WMS Layer"><svg><use href="#l-wms"/></svg></button>
      <button class="sb" aria-label="Add WCS Layer"><svg><use href="#l-wcs"/></svg></button>
      <button class="sb" aria-label="Add WFS Layer"><svg><use href="#l-wfs"/></svg></button>
      <button class="sb" aria-label="Add Delimited Text"><svg><use href="#l-csv"/></svg></button>
      <button class="sb wide" aria-label="New Vector Layer"><svg><use href="#l-newvec"/></svg></button>
      <button class="sb" aria-label="GPS Tools"><svg><use href="#l-gps"/></svg></button>
      <i class="hgrip low"></i>
      <button class="sb" aria-label="Coordinate Capture"><svg><use href="#l-cross"/></svg></button>
      <button class="more" aria-label="More tools"><svg viewBox="0 0 7 9"><path d="M1 .5l2.500 2.500L6 .5M1 5l2.500 2.500L6 5" fill="none" stroke="#000" stroke-width="1.500"/></svg></button>
    </aside>

    <section class="panel" aria-label="Layers">
      <div class="phead"><i class="hgrip"></i>
        <button class="mini" aria-label="Float"><svg viewBox="0 0 12 12"><path d="M4.500 2v2M4 2.500h6.500M10.500 2v5H8M4.500 2h6" fill="none" stroke="#000" stroke-width="1.400"/><path d="M1.500 5.500h6v4.500h-6zM1.500 5h6" fill="#fff" stroke="#000" stroke-width="1.400"/></svg></button>
        <button class="mini" aria-label="Close panel"><svg viewBox="0 0 12 12"><path d="M2 2l8 8M10 2l-8 8" stroke="#000" stroke-width="1.700"/></svg></button>
      </div>
      <div class="ptools">
        <button aria-label="Add Group"><svg viewBox="0 0 16 16"><path d="M1.500 5.500h8v9h-8z" fill="#eee" stroke="#777"/><path d="M3.500 3.500h8v9h-8z" fill="#f0f0f0" stroke="#777"/><path d="M5.500 1.500h8v9h-8z" fill="#f6f6f6" stroke="#777"/><path d="M8.500 8V3.500q1-1.500 2 0v6.500q-1 1.500-2 0" fill="none" stroke="#31608f"/></svg></button>
        <button aria-label="Manage Visibility"><svg viewBox="0 0 16 16"><path d="M0 7.500q7-7 15 0q-8 5.500-15 0z" fill="#fff" stroke="#999"/><circle cx="7.500" cy="7" r="3.200" fill="#6f95c0"/><circle cx="7.500" cy="7" r="1.300" fill="#333"/><path d="M11 13h5l-2.500 3z" fill="#000"/></svg></button>
        <button aria-label="Filter Legend"><svg viewBox="0 0 16 16"><path d="M1 1.500h14L10 8v4l-3.500 3V8z" fill="#3f9f51" stroke="#25773a"/><path d="M3 2.500h10" stroke="#9ed6a5"/></svg></button>
        <button aria-label="Expand All"><svg viewBox="0 0 16 16"><rect x=".5" y="1.500" width="15" height="13" fill="#fff" stroke="#3b74c6"/><path d="M1 2.500h14" stroke="#5b95e2" stroke-width="2"/><path d="M3 5h3v3H3zM6 9h4v4H6z" fill="#f59b25"/><path d="M11.500 4v5" stroke="#f00" stroke-width="2.500"/><path d="M8.500 8.500h6l-3 4z" fill="#f00"/></svg></button>
        <button aria-label="Collapse All"><svg viewBox="0 0 16 16"><rect x=".5" y="1.500" width="15" height="13" fill="#fff" stroke="#3b74c6"/><path d="M1 2.500h14" stroke="#5b95e2" stroke-width="2"/><path d="M3 5h3v3H3zM6 9h4v4H6z" fill="#f59b25"/><path d="M11.500 7v7" stroke="#f00" stroke-width="2.500"/><path d="M8.500 8.500h6l-3-4z" fill="#f00"/></svg></button>
        <button aria-label="Remove Layer"><svg viewBox="0 0 16 16"><rect x="1.500" y="1.500" width="12" height="12" fill="#eee" stroke="#999"/><rect x="10" y="10" width="6" height="6" rx="1" fill="#e0474c"/><path d="M11 13h4" stroke="#fff" stroke-width="1.300"/></svg></button>
      </div>
      <ul class="tree">
        <li class="row"><i class="branch"></i><svg class="ticon" viewBox="0 0 14 16"><rect x=".5" y=".5" width="13" height="14" rx="1" fill="#f2f2f2" stroke="#888"/><path d="M1 2.500h12" stroke="#bbb" stroke-width="3"/><path d="M2 5.500h4M8 5.500h4M2 8.500h4M8 8.500h4M2 11.500h4M8 11.500h4" stroke="#888"/></svg><span class="lname">fb_test1.dbf</span></li>
        <li class="row current"><i class="branch last"></i><input type="checkbox" class="tick" id="lay" checked><i class="dot"></i><label class="lname active" for="lay">coord_test1</label></li>
      </ul>
    </section>

    <i class="splitter"></i>

    <main class="map">
      <div class="pt" style="left:183px;top:173px"><span>10004</span></div>
      <div class="pt" style="left:578px;top:139px"><span>10003</span></div>
      <div class="pt" style="left:509px;top:195px"><span>10006</span></div>
      <div class="pt" style="left:419px;top:218px"><span>232</span></div>
      <div class="pt" style="left:600px;top:239px"><span>10001</span></div>
      <div class="pt" style="left:416px;top:273px"><span>231</span></div>
      <div class="pt" style="left:547px;top:323px"><span>10002</span></div>
      <div class="pt" style="left:305px;top:394px"><span>10005</span></div>
    </main>
  </div>

  <footer class="status">
    <button class="stb" aria-label="Toggle extents"><svg viewBox="0 0 16 16"><path d="M3 2.500q3-2 5 1l2 4q3 0 3.500 3t-3 4.500-5-2.500L2.500 7Q1 4.500 3 2.500z" fill="#eee" stroke="#222" stroke-width="1.700"/><path d="M5 3l3 5M3 6l4-2M8 8l-3 2M10 9l1 4M12 3l2-1M10 4l2 2" stroke="#222" stroke-width="1.300"/></svg></button>
    <label class="lcoord" for="coord">Coordinate:</label>
    <input id="coord" type="text" value="81962,4126">
    <label class="lscale" for="scale">Scale</label>
    <span class="combo"><select id="scale"><option>1:60 230</option></select></span>
    <input type="checkbox" class="tick" id="render" checked><label class="lrender" for="render">Render</label>
    <span class="epsg">EPSG:23700</span>
    <button class="stb" aria-label="CRS status"><svg viewBox="0 0 16 16"><circle cx="8" cy="8" r="6.500" fill="#bbb" stroke="#222" stroke-width="2.200"/><path d="M1 8h14M8 1v14M4 3q-2 5 0 10M12 3q2 5 0 10" fill="none" stroke="#222" stroke-width="1.300"/><path d="M8 4l3 4-3 4-3-4z" fill="#eee" stroke="#333"/></svg></button>
    <button class="stb" aria-label="Messages"><svg viewBox="0 0 16 16"><path d="M8 1.500l6.500 12.500h-13z" fill="#f6f2a0" stroke="#999468"/><path d="M8 5.500v4.500M8 11.500v1.500" stroke="#222" stroke-width="1.500"/></svg></button>
  </footer>
</div>
</body>
</html>
```
FILE: styles.css
```css
* { box-sizing: border-box; }
html, body { height: 100%; margin: 0; }
body {
  background: #efefef;
  color: #000;
  font-family: "DejaVu Sans Condensed", "Noto Sans", sans-serif;
  font-size: 11px;
  line-height: 14px;
}
button, input, select { font: inherit; color: inherit; margin: 0; }
button { background: none; border: 0; padding: 0; }
.gradients { position: absolute; width: 0; height: 0; }
.sprites { display: none; }
.window { display: flex; flex-direction: column; height: 100vh; overflow: hidden; }

/* icon lettering */
.t9 { font: bold 8px "DejaVu Sans Condensed", sans-serif; }
.serif-i { font: italic bold 15px "Liberation Serif", serif; }
.serif12 { font: bold 13px "Liberation Serif", serif; }
.serif15 { font: 16px "Liberation Serif", serif; }
.qmark { font: 25px "Liberation Serif", serif; stroke: #000; stroke-width: 1px; }
.eps { font: bold 25px "Liberation Serif", serif; }
.abc { font: bold 8px "DejaVu Sans", sans-serif; }
.csw { font: bold 8px "DejaVu Sans Condensed", sans-serif; }
.num { font: bold 8px "Liberation Sans", sans-serif; }

/* title bar */
.titlebar {
  position: relative;
  flex: none;
  display: flex;
  align-items: center;
  height: 22px;
  overflow: hidden;
  border-bottom: 1px solid #33475f;
  background:
    radial-gradient(ellipse 26px 14px at 1006px 18px, #8fd0fa 30%, transparent),
    radial-gradient(ellipse 24px 14px at 1240px 18px, #8fd0fa 30%, transparent),
    linear-gradient(transparent 19px, #a9c6e4 20px),
    linear-gradient(90deg, #a8c4e4 0, #b4cde9 200px, #86b2e0 360px, #93c2f0 560px, #8fc1f2 605px, #3f79b3 630px, #396fa9 850px, #315f94 980px, #335f94 1220px, #86a6cb 1270px, #a9c0da 100%);
}
.ghost { position: absolute; top: 6px; height: 10px; filter: blur(4px); background: #54789f; opacity: .6; }
.g1 { left: 212px; width: 98px; }
.g2 { left: 318px; width: 126px; }
.g3 { left: 458px; width: 146px; }
.logo { width: 16px; height: 16px; position: relative; flex: none; }
.title { margin: 0 0 0 5px; font: 12px/20px "Open Sans", sans-serif; position: relative; }
.winbtns {
  display: flex;
  align-self: flex-start;
  margin-left: auto;
  margin-right: 3px;
  height: 18px;
  border: 1px solid #34445a;
  border-top: 0;
  border-radius: 0 0 5px 5px;
  overflow: hidden;
}
.wb {
  width: 28px;
  display: grid;
  place-items: center;
  background: linear-gradient(#c5d2e2, #a3b5ca 45%, #6f89a8 50%, #a5bdd6);
  border-right: 1px solid #43546b;
  box-shadow: inset 0 0 0 1px #ffffff66;
}
.wb svg { width: 13px; height: 13px; }
.close { width: 46px; border-right: 0; background: linear-gradient(#e4a492, #d0705a 45%, #b93520 50%, #d8664a); }

/* menu */
.menubar { flex: none; display: flex; gap: 14px; height: 23px; padding: 3px 9px 0; border-bottom: 1px solid #b9b9b9; }

/* toolbars */
.toolbar { flex: none; display: flex; height: 39px; padding: 3px 6px 2px; border-bottom: 1px solid #b9b9b9; box-shadow: inset 0 1px #fafafa; }
.group { display: flex; margin-right: 8px; }
.edit { margin-right: 35px; }
.label { margin-right: 43px; }
.blank { width: 85px; }
.grip, .hgrip, .splitter {
  background-image:
    radial-gradient(circle at 1px 1px, #bbb 1px, transparent 1px),
    radial-gradient(circle at 1px 1px, #bbb 1px, transparent 1px),
    radial-gradient(circle at 2px 2px, #fff 1px, transparent 1px),
    radial-gradient(circle at 2px 2px, #fff 1px, transparent 1px);
  background-size: 6px 6px;
  background-position: 0 0, 3px 3px, 0 0, 3px 3px;
}
.grip { flex: none; width: 6px; height: 30px; margin-top: 1px; }
.tb { flex: none; width: 35px; height: 33px; display: flex; align-items: center; padding-left: 5px; position: relative; }
.tb svg, .sb svg { width: 25px; height: 25px; display: block; flex: none; }
.pressed { background: #cfcfcf; box-shadow: inset 0 0 0 1px #8a8a8a; border-radius: 3px; }
.hover { background: linear-gradient(#fff, #e4e4e4); box-shadow: inset 0 0 0 1px #8f8f8f; border-radius: 3px; }
.drop { width: 47px; }
.drop::after, .wide::after, .corner::after, .combo::after {
  content: "";
  border: 5px solid transparent;
  border-top-color: #000;
  border-bottom: 0;
}
.drop::after { margin-left: 4px; }
.off::after { border-top-color: #999; }
.corner::after { position: absolute; right: 4px; bottom: 4px; border-width: 3px 3px 0; border-top-color: #888; }
.sep { width: 1px; margin: 1px; height: 31px; background: #bbb; }
.tipwrap { position: relative; display: flex; }
.tooltip {
  position: absolute;
  left: 17px;
  top: 33px;
  z-index: 5;
  width: 135px;
  height: 20px;
  padding: 2px 1px;
  white-space: nowrap;
  background: #ffffdc;
  border: 1px solid #000;
  box-shadow: 2px 2px 2px #0005;
}

/* body */
.main { flex: 1; min-height: 0; display: flex; padding-top: 1px; }
.side { flex: none; width: 53px; display: flex; flex-direction: column; border-right: 2px solid #bcbcbc; padding-top: 4px; }
.side .hgrip { margin-left: 5px; width: 42px; }
.hgrip { flex: none; height: 6px; }
.side .low { margin-top: 9px; }
.sb { flex: none; height: 34px; padding: 4px 0 0 14px; display: flex; align-items: flex-start; }
.wide { padding-left: 8px; }
.wide::after { margin: 10px 0 0 4px; }
.more { margin: auto 0 3px 17px; width: 7px; height: 9px; display: block; }
.more svg { display: block; width: 7px; height: 9px; }

.panel { flex: none; width: 284px; display: flex; flex-direction: column; }
.phead { display: flex; align-items: center; gap: 1px; height: 16px; padding: 0 1px 0 3px; }
.phead .hgrip { flex: 1; margin-right: 4px; }
.mini { width: 14px; height: 14px; border: 1px solid #888; border-radius: 3px; background: #fafafa; }
.mini svg { display: block; width: 12px; height: 12px; }
.ptools { display: flex; gap: 16px; padding: 7px 9px 11px; }
.ptools button, .ptools svg { width: 16px; height: 16px; display: block; }
.tree { flex: 1; list-style: none; margin: 0; padding: 2px 1px; background: #fff; border: 1px solid #b4b4b4; border-radius: 2px; }
.row { display: flex; align-items: center; height: 16px; padding-left: 9px; }
.current { background: #efefef; }
.branch { width: 10px; height: 16px; margin-right: 4px; border-left: 1px dotted #999; background: linear-gradient(90deg, #aaa 50%, transparent 50%) 0 8px / 2px 1px repeat-x; }
.last { align-self: flex-start; height: 9px; }
.ticon { width: 14px; height: 16px; margin-right: 7px; }
.lname { font-weight: bold; padding-top: 1px; }
.active { text-decoration: underline; }
.tick { appearance: none; width: 12px; height: 12px; background: #fff; display: grid; place-items: center; }
.tick:checked::before { content: "✖"; font: 13px/12px "DejaVu Sans", sans-serif; }
.dot { width: 9px; height: 9px; margin: 0 10px 0 9px; border-radius: 50%; background: #2e85a3; border: 1px solid #1e5a70; }
.splitter { flex: none; width: 5px; height: 180px; margin: auto 1px; }

.map { flex: 1; position: relative; background: #fff; border: 2px solid #5ba4f2; margin-right: 1px; overflow: hidden; }
.pt { position: absolute; width: 9px; height: 9px; margin: -5px 0 0 -5px; border: 1px solid #0c2321; border-radius: 50%; background: #27857b; }
.pt span { position: absolute; left: 3px; bottom: 3px; white-space: nowrap; }

/* status bar */
.status { flex: none; display: flex; align-items: center; justify-content: flex-end; height: 27px; padding: 2px 0 0; }
.stb { width: 20px; height: 20px; border: 1px solid #aaa; border-radius: 3px; background: #f7f7f7; display: grid; place-items: center; }
.stb svg { width: 16px; height: 16px; }
.stb + .stb { margin-left: 6px; }
#coord { width: 300px; height: 20px; border: 1px solid #aaa; border-radius: 3px; background: #fff; text-align: center; padding: 0; }
.lcoord { width: 67px; margin-left: 8px; }
.lscale { width: 38px; margin-left: 8px; }
.combo { display: flex; align-items: center; width: 87px; height: 20px; border: 1px solid #aaa; border-radius: 3px; background: #fff; margin-right: 7px; }
.combo select { flex: 1; min-width: 0; height: 18px; appearance: none; border: 0; border-right: 1px solid #bbb; background: none; padding: 0 4px; }
.combo::after { border-width: 5px 4px 0; margin: 0 3px; }
.lrender { width: 50px; margin-left: 4px; }
.epsg { width: 69px; }
```
